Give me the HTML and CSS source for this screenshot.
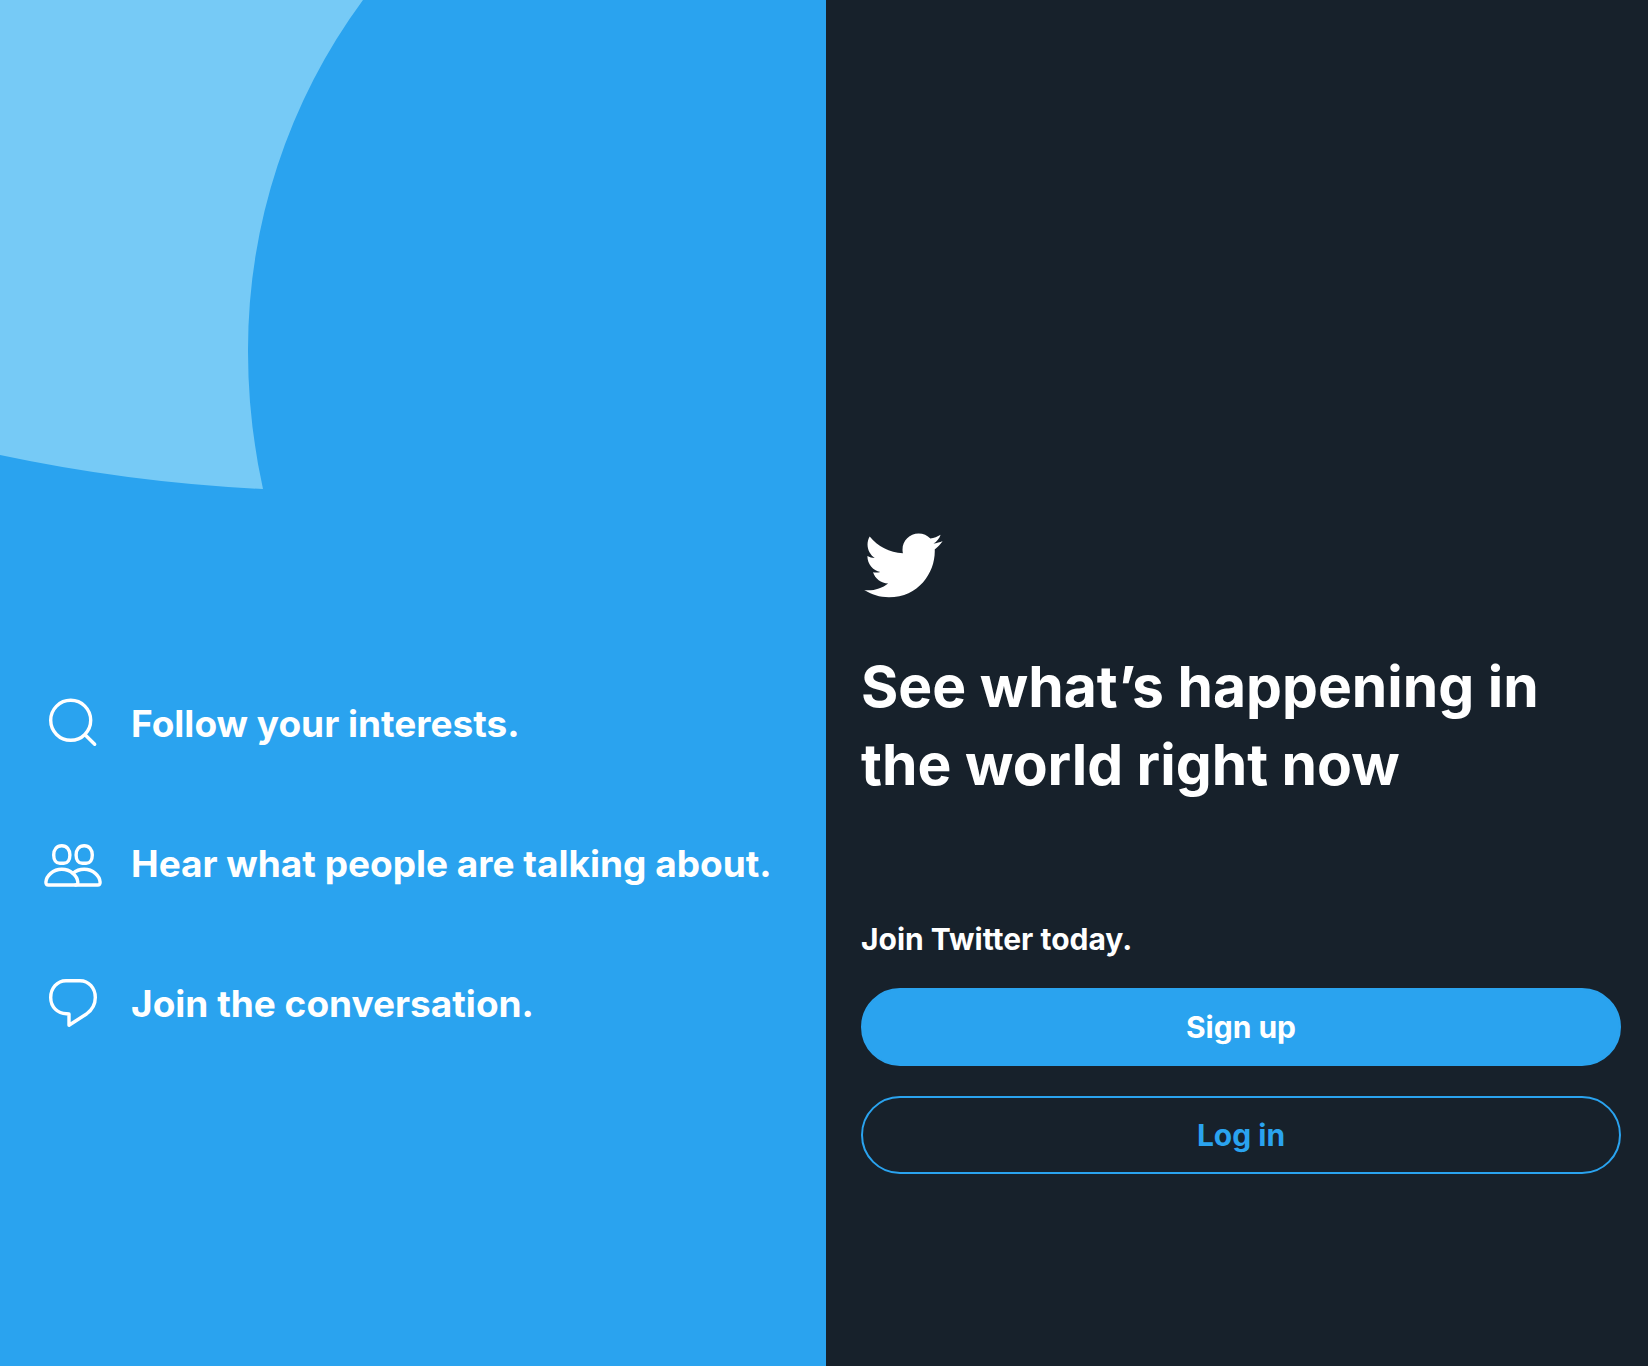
FILE: index.html
```html
<!DOCTYPE html>
<html lang="en">
<head>
<meta charset="utf-8">
<meta name="viewport" content="width=device-width, initial-scale=1">
<title>Twitter</title>
<link rel="stylesheet" href="styles.css">
</head>
<body>
<div class="landing">
  <section class="pitch">
    <svg class="pitch-art" viewBox="0 0 370 490" aria-hidden="true">
      <path d="M0 0H363A590 590 0 0 0 248 350A640 640 0 0 0 263 489A1640 1640 0 0 1 0 455Z"/>
    </svg>
    <ul class="reasons">
      <li class="reason">
        <svg class="icon" viewBox="0 0 60 60" aria-hidden="true">
          <circle cx="27.7" cy="26.3" r="20"/>
          <path d="M42.3 41l9.4 9.3"/>
        </svg>
        <span>Follow your interests.</span>
      </li>
      <li class="reason">
        <svg class="icon" viewBox="0 0 60 60" aria-hidden="true">
          <path d="M18.8 11.7c-5 0-8.1 3.8-8.1 9.3 0 5 2.3 8.3 6.1 8.3h4c3.8 0 6.1-3.3 6.1-8.3 0-5.5-3.1-9.3-8.1-9.3z"/>
          <path d="M41.2 11.7c-5 0-8.1 3.8-8.1 9.3 0 5 2.3 8.3 6.1 8.3h4c3.8 0 6.1-3.3 6.1-8.3 0-5.5-3.1-9.3-8.1-9.3z"/>
          <path d="M5.5 51c-1.9 0-2.7-1-2.6-2.8C3.3 41.8 10 35.3 18.8 35.3S34.3 41.8 34.8 48.2c.1 1.8-.6 2.8-2.3 2.8z"/>
          <path d="M30 39.3c3-2.600 6.800-4 11.200-4 8.800 0 15.500 6.500 15.900 12.900.1 1.800-.7 2.800-2.600 2.800h-22"/>
        </svg>
        <span>Hear what people are talking about.</span>
      </li>
      <li class="reason">
        <svg class="icon" viewBox="0 0 60 60" aria-hidden="true">
          <path d="M37 6.7H23C14 6.7 7.7 14.5 7.7 23.5C7.7 33 14.5 39.5 23.5 39.8L26 40V51.2L43.5 40C49 36 52.3 31.5 52.3 23.5C52.3 14.5 46 6.7 37 6.7Z"/>
        </svg>
        <span>Join the conversation.</span>
      </li>
    </ul>
  </section>
  <main class="join">
    <svg class="logo" viewBox="0 0 24 24" role="img" aria-label="Twitter">
      <path d="M23.643 4.937c-.835.37-1.732.62-2.675.733.962-.576 1.7-1.49 2.048-2.578-.9.534-1.897.922-2.958 1.13-.85-.904-2.06-1.47-3.4-1.47-2.572 0-4.658 2.086-4.658 4.66 0 .364.042.718.12 1.06-3.873-.195-7.304-2.05-9.602-4.868-.4.69-.63 1.49-.63 2.342 0 1.616.823 3.043 2.072 3.878-.764-.025-1.482-.234-2.11-.583v.06c0 2.257 1.605 4.14 3.737 4.568-.392.106-.803.162-1.227.162-.3 0-.593-.028-.877-.082.593 1.85 2.313 3.198 4.352 3.234-1.595 1.25-3.604 1.995-5.786 1.995-.376 0-.747-.022-1.112-.065 2.062 1.323 4.51 2.093 7.14 2.093 8.57 0 13.255-7.098 13.255-13.254 0-.2-.005-.402-.014-.602.91-.658 1.7-1.477 2.323-2.41z"/>
    </svg>
    <h1 class="headline">See what’s happening in the world right now</h1>
    <h2 class="prompt">Join Twitter today.</h2>
    <div class="actions">
      <button class="btn btn-primary" type="button">Sign up</button>
      <button class="btn btn-outline" type="button">Log in</button>
    </div>
  </main>
</div>
</body>
</html>
```
FILE: styles.css
```css
* {
  box-sizing: border-box;
}

body {
  margin: 0;
  font-family: Inter, "Liberation Sans", sans-serif;
  font-weight: 700;
  color: #fff;
  background: #17212b;
}

.landing {
  display: grid;
  grid-template-columns: 413fr 411fr;
  min-height: 100vh;
}

.pitch {
  position: relative;
  padding: 694px 28px 80px 43px;
  background: #2aa3ef;
}

.pitch-art {
  position: absolute;
  top: 0;
  left: 0;
  width: 370px;
  height: 490px;
  fill: #76caf6;
}

.reasons {
  display: flex;
  flex-direction: column;
  gap: 80px;
  margin: 0;
  padding: 0;
  list-style: none;
}

.reason {
  display: flex;
  align-items: center;
  gap: 28px;
  font-size: 37px;
  line-height: 48px;
}

.icon {
  flex: none;
  width: 60px;
  height: 60px;
  fill: none;
  stroke: #fff;
  stroke-width: 3.4;
  stroke-linecap: round;
  stroke-linejoin: round;
}

.join {
  display: flex;
  flex-direction: column;
  padding: 524px 27px 80px 35px;
}

.logo {
  width: 83px;
  height: 83px;
  fill: #fff;
}

.headline {
  margin: 41px 0 0;
  font-size: 57px;
  line-height: 78px;
}

.prompt {
  margin: 115px 0 0;
  font-size: 30px;
  line-height: 40px;
}

.actions {
  display: flex;
  flex-direction: column;
  gap: 30px;
  margin-top: 29px;
}

.btn {
  height: 78px;
  border: 2px solid #2aa3ef;
  border-radius: 39px;
  font: inherit;
  font-size: 30px;
  cursor: pointer;
}

.btn-primary {
  color: #fff;
  background: #2aa3ef;
}

.btn-outline {
  color: #2aa3ef;
  background: transparent;
}
```
